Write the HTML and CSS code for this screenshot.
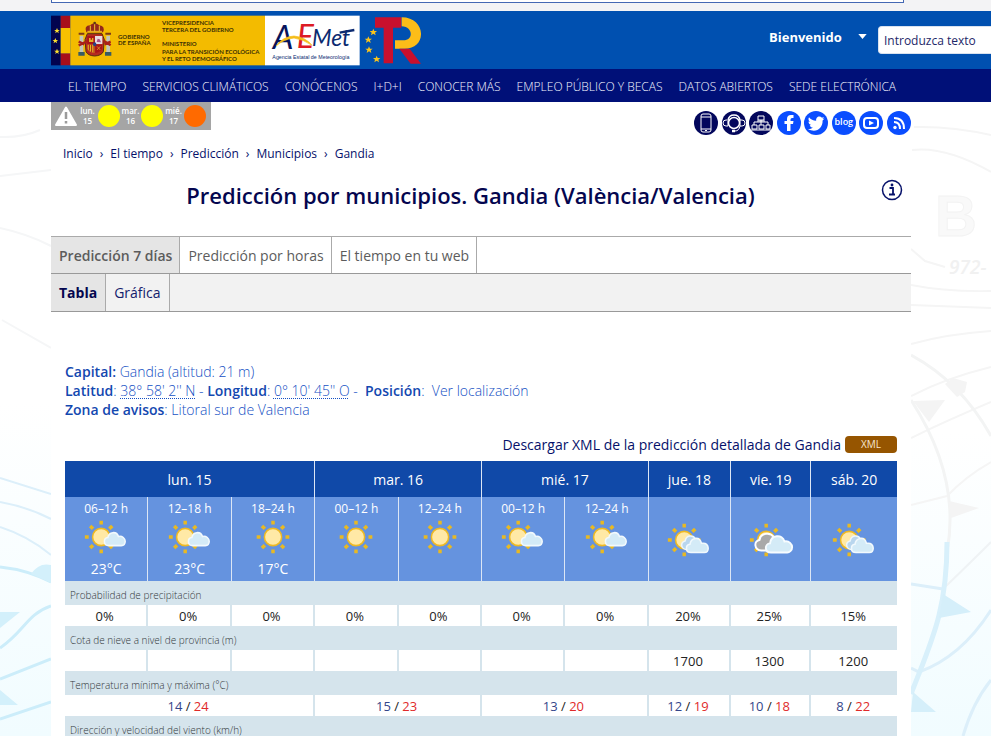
FILE: index.html
```html
<!DOCTYPE html>
<html lang="es">
<head>
<meta charset="utf-8">
<title>El Tiempo: Gandia</title>
<link rel="stylesheet" href="styles.css">
</head>
<body>
<svg class="defs" aria-hidden="true">
  <defs>
    <g id="sun">
      <path d="M20 2v4M20 32v4M3 19h4M33 19h4M8.500 7.500l3 3M31.500 7.500l-3 3M8.500 30.500l3-3M31.500 30.500l-3-3" stroke="#e8b923" stroke-width="3.600"/>
      <circle cx="20" cy="19" r="9" fill="#ffe9a6" stroke="#efb922" stroke-width="1.600"/>
    </g>
    <path id="cloud" d="M28 28c-6 0-6-8-1-8.500c1-6 9-7 11-1c4-1 7 2 7 5c0 3-2 4.500-4 4.500z"/>
    <linearGradient id="wash" x1="0" y1="0" x2="0" y2="1"><stop offset="0" stop-color="#fff"/><stop offset="1" stop-color="#f1fcff"/></linearGradient>
    <symbol id="sunny" viewBox="0 0 50 38"><use href="#sun" x="5"/></symbol>
    <symbol id="few" viewBox="0 0 50 38"><use href="#sun"/><use href="#cloud" fill="#d4ebf7" stroke="#f2f9fd" stroke-width="1.600"/></symbol>
    <symbol id="broken" viewBox="0 0 50 38"><use href="#sun"/><path d="M22 29c-6-1-6-8-1-9c1-6 8-7 11-2l-3 11z" fill="#b9d6ee" stroke="#edf6fb" stroke-width="1.500"/><path d="M27 32c-6 0-6-8-1-8.500c1-7 10-9 12-1c5-1 7 2 7 5c0 3-2 4.500-4 4.500z" fill="#d4ebf7" stroke="#f2f9fd" stroke-width="1.600"/></symbol>
    <symbol id="overcast" viewBox="0 0 50 38"><use href="#sun"/><path d="M15 30c-8-1-8-10-2-11c1-7 11-9 15-3l-4 14z" fill="#a9a9a9" stroke="#fff" stroke-width="2"/><path d="M25 32c-7 0-7-9-1-9.500c1-9 13-10 15-2c5-1 8 3 8 6c0 3.500-3 5.500-5 5.500z" fill="#d4ebf7" stroke="#f7fcff" stroke-width="2"/></symbol>
  </defs>
</svg>

<svg class="chart chart-left" viewBox="0 0 51 634" aria-hidden="true">
  <rect y="300" width="51" height="334" fill="url(#wash)"/>
  <g fill="none" stroke="#f5f6f7" stroke-width="2"><path d="M0 35Q22 36 40 28M0 74L51 68M0 126Q28 132 51 144M2 218L51 246"/></g>
  <g fill="none" stroke="#dceffa" stroke-width="2"><path d="M0 376L51 392M0 400Q28 405 51 417M0 425Q28 434 51 453"/></g>
  <g fill="none" stroke="#ccedfa" stroke-width="3"><path d="M0 465Q28 468 51 480M0 546C24 530 27 512 51 504M0 577L51 557M0 617L51 600"/></g>
  <path d="M31 472Q39 460 51 463V481zM0 510H20L0 526zM0 588L18 603H0z" fill="#d3f0fb"/>
</svg>
<svg class="chart chart-right" viewBox="0 0 80 634" aria-hidden="true">
  <rect y="330" width="80" height="304" fill="url(#wash)"/>
  <g fill="none" stroke="#f5f5f5" stroke-width="2"><path d="M1 48Q35 44 80 70M3 25Q40 24 80 33M0 147L14 159L34 165M0 183Q35 190 80 189M0 203L80 206M0 242Q36 232 80 229M0 294Q35 276 80 265M0 336Q35 319 80 300M0 403L36 394Q55 374 80 360"/></g>
  <path d="M0 253Q50 280 80 334M0 298Q50 375 36 450" fill="none" stroke="#f3f4f4" stroke-width="3"/>
  <path d="M34 282L42 276L56 280L54 290L46 295zM2 299L34 298L18 320zM38 399L68 406L40 416z" fill="#f4f4f4"/>
  <g fill="none" stroke="#dceffa" stroke-width="3"><path d="M0 482L32 487M0 566L8 570Q50 555 80 508M52 634Q62 600 80 578"/></g>
  <path d="M32 487Q60 460 80 440" fill="none" stroke="#eff3f5" stroke-width="2"/>
  <path d="M36 440C36 510 20 540 0 592" fill="none" stroke="#d8f0fb" stroke-width="5"/>
  <path d="M32 492L60 510L28 516zM2 590L25 610H0z" fill="#d5effa"/>
  <text x="24" y="134" class="chart-letter">B</text>
  <text x="38" y="172" class="chart-number">972-</text>
</svg>

<div class="top-strip"><div class="notice"></div></div>

<header class="masthead">
  <a href="#" class="logos" aria-label="Agencia Estatal de Meteorología">
  <svg viewBox="33 45 1110 153" width="370" height="51">
    <rect x="33" y="47" width="29" height="149" fill="#02044f"/>
    <path d="M62 47h29v37H62zM62 160h29v36H62z" fill="#a80f1b"/>
    <path d="M62 84h29v76H62z" fill="#f8c000"/>
    <rect x="91" y="47" width="584" height="149" fill="#f3bb00"/>
    <g fill="#fcdf2e"><path id="st" d="M51 84l2.500 6h6l-5 4l2 6l-5.500-4l-5.500 4l2-6l-5-4h6z"/><use href="#st" x="-5" y="30"/><use href="#st" y="62"/></g>
    <g>
      <path d="M142 101h44l7 18-3 36q-6 12-26 13-20-1-26-13l-3-36z" fill="#b52b20" stroke="#55300f" stroke-width="3"/>
      <path d="M165 108h22v24h-22z" fill="#e7dce2"/><path d="M142 108h22v24h-22z" fill="#a91419"/><path d="M147 126v-12h5v5h4v-5h4v12z" fill="#e2b323"/>
      <path d="M170 126l3-10 6 2 4 9z" fill="#aa508b"/><path d="M143 134h21v24q-20-3-21-12z" fill="#e3b923"/><path d="M148 134v18M155 134v22M162 134v24" stroke="#a91419" stroke-width="3"/><path d="M166 134h20v13q-5 9-20 12z" fill="#a91419"/>
      <path d="M171 139l10 11m0-11l-10 11" stroke="#e2b323" stroke-width="2"/><ellipse cx="164" cy="133" rx="5" ry="6" fill="#294185"/>
      <path d="M139 97q-8-20 11-21 14-12 28 0 19 3 11 21z" fill="#93281b"/><path d="M164 67v28M151 77v16M178 77v16M142 94h44" stroke="#efc32c" stroke-width="3"/><circle cx="164" cy="69" r="4" fill="#5c3a16"/>
      <path d="M119 107h11v49h-11zM199 107h11v49h-11z" fill="#c1c6bb"/><path d="M116 104h17v-6h-17zM196 104h17v-6h-17z" fill="#7c3a19"/>
      <path d="M115 156h19v11h-19zM195 156h19v11h-19z" fill="#375b64"/><path d="M116 136l27-13M212 136l-20-13M116 125l17 8M212 125l-18 8" stroke="#aa2018" stroke-width="7"/>
    </g>
    <g class="gov-text"><text x="234" y="117">GOBIERNO</text><text x="234" y="136">DE ESPAÑA</text>
    <text x="366" y="75">VICEPRESIDENCIA</text><text x="366" y="96">TERCERA DEL GOBIERNO</text><text x="366" y="139">MINISTERIO</text><text x="366" y="162">PARA LA TRANSICIÓN ECOLÓGICA</text><text x="366" y="183">Y EL RETO DEMOGRÁFICO</text></g>
    <rect x="675" y="47" width="284" height="149" fill="#fff"/>
    <g class="aemet"><text x="698" y="148" fill="#07145c" font-size="98">A</text><text x="770" y="145" fill="#dd1b24" font-size="96">E</text><text x="816" y="139" fill="#0b2a70" font-size="68">Met</text></g>
    <path d="M708 138Q728 110 762 108Q798 112 816 136Q790 118 762 114Q730 118 708 138" fill="#f5bd19" stroke="#f5bd19" stroke-width="2"/>
    <path d="M899 98L943 90" stroke="#0b2a70" stroke-width="7"/>
    <text x="697" y="177" class="agency">Agencia Estatal de Meteorología</text>
    <path d="M1005 52h79v31h-25v107h-28V83h-26z" fill="#c8102e"/>
    <path d="M1085 52c75 0 78 97 5 94h-25v-25h25c31 0 30-41-5-42z" fill="#fcbd18"/>
    <path d="M1078 146h31l34 45h-31z" fill="#c8102e"/>
    <g fill="#fbc51b"><path id="st2" d="M985 109l3 7h8l-6 5 2 8-7-5-7 5 2-8-6-5h8z"/><use href="#st2" x="15" y="-23"/><use href="#st2" x="2" y="30"/><use href="#st2" x="25" y="58"/></g>
  </svg></a>
  <label class="account"><span class="hidden">Cuenta</span>
    <select><option>Bienvenido</option></select>
    <svg viewBox="0 0 10 6" width="9" height="5"><path d="M0 0h10L5 6z" fill="#fff"/></svg>
  </label>
  <input class="search" type="text" aria-label="Buscar" placeholder="Introduzca texto">
</header>

<nav class="main-nav" aria-label="Principal">
  <a href="#">EL TIEMPO</a><a href="#">SERVICIOS CLIMÁTICOS</a><a href="#">CONÓCENOS</a><a href="#">I+D+I</a><a href="#">CONOCER MÁS</a><a href="#">EMPLEO PÚBLICO Y BECAS</a><a href="#">DATOS ABIERTOS</a><a href="#">SEDE ELECTRÓNICA</a>
</nav>

<main class="page">
  <div class="tools">
    <a href="#" class="warnings">
      <svg viewBox="0 0 22 20" width="22" height="20"><path d="M11 1.500L21 19H1z" fill="#fff" stroke="#fff" stroke-width="2" stroke-linejoin="round"/><path d="M11 6v7M11 15v2.500" stroke="#9b9b9b" stroke-width="2.500"/></svg>
      <span class="day">lun.<br>15</span><i class="dot"></i>
      <span class="day">mar.<br>16</span><i class="dot"></i>
      <span class="day">mié.<br>17</span><i class="dot orange"></i>
    </a>
    <div class="social">
      <a href="#" aria-label="Móvil" class="navy"><svg viewBox="0 0 24 24"><rect x="7" y="3" width="10" height="18" rx="2"/><path d="M7 6h10M7 18h10M11 19.500h2"/></svg></a>
      <a href="#" aria-label="Atención" class="navy"><svg viewBox="0 0 24 24"><circle cx="12" cy="12" r="5.500" stroke-width="1.500"/><path d="M5 9H4a2 2 0 0 0 0 6h2V9M18 9h2a2 2 0 0 1 0 6h-2zM18 15q-1 5-5 5"/><path d="M10 20h3" stroke-width="2.500"/><path d="M6 9q1-5 6-5t6 5" stroke-width="1.500"/></svg></a>
      <a href="#" aria-label="Mapa web" class="navy"><svg viewBox="0 0 24 24"><path d="M9 5h6v4H9zM3 14h5v4H3zM10 14h5v4h-5zM17 14h4v4h-4zM12 9v5M5 14v-3h14v3M2 19h20M8 10h8"/></svg></a>
      <a href="#" aria-label="Facebook"><svg viewBox="0 0 24 24"><path class="solid" d="M10 20v-7H7.500v-3H10V8q0-4 4-4h2.500v3H15q-1.500 0-1.500 1.500V10h3l-.5 3h-2.500v7z"/></svg></a>
      <a href="#" aria-label="Twitter"><svg viewBox="0 0 24 24"><path class="solid" d="M20.500 7.500l-2 .5 1.500-2-2 .8c-3-3-6.500 0-5.800 3-3 0-5.500-1.500-7.200-3.600-1 1.700-.5 3.700 1 4.800l-1.500-.4c0 1.700 1 3 2.700 3.500l-1.500.1c.5 1.400 1.700 2.300 3.200 2.300-1.600 1.200-3.200 1.600-5 1.500 8 4.500 15-.5 14.700-8.500z"/></svg></a>
      <a href="#" class="blog">blog</a>
      <a href="#" aria-label="YouTube"><svg viewBox="0 0 24 24"><rect x="5" y="7" width="14" height="10" rx="3" stroke-width="2"/><path class="solid" d="M10 9.500l5 2.500-5 2.500z"/></svg></a>
      <a href="#" aria-label="RSS"><svg viewBox="0 0 24 24"><circle class="solid" cx="8" cy="16.500" r="1.700"/><path d="M7 11q6 0 6 7M7 7q10 0 10 11" stroke-width="2"/></svg></a>
    </div>
  </div>

  <nav class="crumbs" aria-label="Ruta"><a href="#">Inicio</a><span>›</span><a href="#">El tiempo</a><span>›</span><a href="#">Predicción</a><span>›</span><a href="#">Municipios</a><span>›</span><a href="#">Gandia</a></nav>

  <div class="title-row">
    <h1>Predicción por municipios. Gandia (València/Valencia)</h1>
    <a href="#" aria-label="Información"><svg viewBox="0 0 22 22" width="22" height="22"><circle cx="11" cy="11" r="9.500" fill="#fff" stroke="#06116a" stroke-width="1.500"/><path d="M8.500 9H12v6M8 15.500h6" fill="none" stroke="#06116a" stroke-width="1.800"/><circle cx="11" cy="6" r="1.400" fill="#06116a"/></svg></a>
  </div>

  <nav class="tabs" aria-label="Vistas"><a href="#" class="active">Predicción 7 días</a><a href="#">Predicción por horas</a><a href="#">El tiempo en tu web</a></nav>
  <nav class="tabs sub" aria-label="Formato"><a href="#" class="active">Tabla</a><a href="#">Gráfica</a></nav>

  <section class="forecast">
    <div class="place">
      <p><b>Capital:</b> Gandia (altitud: 21 m)</p>
      <p><b>Latitud</b>: <abbr>38° 58' 2'' N</abbr> - <b>Longitud</b>: <abbr>0° 10' 45'' O</abbr> - &nbsp;<b>Posición</b>: &nbsp;<a href="#">Ver localización</a></p>
      <p><b>Zona de avisos</b>: Litoral sur de Valencia</p>
    </div>
    <div class="download"><span>Descargar XML de la predicción detallada de Gandia</span><a href="#">XML</a></div>

    <table>
      <colgroup><col class="period" span="7"><col class="thu"><col class="fri"><col class="sat"></colgroup>
      <thead>
        <tr class="days"><th colspan="3">lun. 15</th><th colspan="2">mar. 16</th><th colspan="2">mié. 17</th><th>jue. 18</th><th>vie. 19</th><th>sáb. 20</th></tr>
        <tr class="sky">
          <th>06–12 h<svg><use href="#few"/></svg><span>23°C</span></th>
          <th>12–18 h<svg><use href="#few"/></svg><span>23°C</span></th>
          <th>18–24 h<svg><use href="#sunny"/></svg><span>17°C</span></th>
          <th>00–12 h<svg><use href="#sunny"/></svg></th>
          <th>12–24 h<svg><use href="#sunny"/></svg></th>
          <th>00–12 h<svg><use href="#few"/></svg></th>
          <th>12–24 h<svg><use href="#few"/></svg></th>
          <th class="whole"><svg><use href="#broken"/></svg></th>
          <th class="whole"><svg><use href="#overcast"/></svg></th>
          <th class="whole"><svg><use href="#broken"/></svg></th>
        </tr>
      </thead>
      <tbody>
        <tr class="label"><th colspan="10">Probabilidad de precipitación</th></tr>
        <tr><td>0%</td><td>0%</td><td>0%</td><td>0%</td><td>0%</td><td>0%</td><td>0%</td><td>20%</td><td>25%</td><td>15%</td></tr>
        <tr class="label"><th colspan="10">Cota de nieve a nivel de provincia (m)</th></tr>
        <tr><td></td><td></td><td></td><td></td><td></td><td></td><td></td><td>1700</td><td>1300</td><td>1200</td></tr>
        <tr class="label"><th colspan="10">Temperatura mínima y máxima (°C)</th></tr>
        <tr><td colspan="3"><span class="min">14</span> / <span class="max">24</span></td><td colspan="2"><span class="min">15</span> / <span class="max">23</span></td><td colspan="2"><span class="min">13</span> / <span class="max">20</span></td><td><span class="min">12</span> / <span class="max">19</span></td><td><span class="min">10</span> / <span class="max">18</span></td><td><span class="min">8</span> / <span class="max">22</span></td></tr>
        <tr class="label"><th colspan="10">Dirección y velocidad del viento (km/h)</th></tr>
      </tbody>
    </table>
  </section>
</main>
</body>
</html>
```
FILE: styles.css
```css
* { box-sizing: border-box; }
html, body { height: 100%; }
body {
  margin: 0;
  position: relative;
  overflow: hidden;
  background: #fff;
  color: #06116a;
  font-family: "Open Sans", "Noto Sans", sans-serif;
  font-size: 14px;
}
a { color: inherit; text-decoration: none; }
.defs { position: absolute; width: 0; height: 0; }
.hidden { position: absolute; width: 1px; height: 1px; overflow: hidden; clip-path: inset(50%); }

/* Weather chart behind both margins */
.chart { position: absolute; top: 102px; height: 634px; z-index: -1; }
.chart-left { left: 0; width: 51px; }
.chart-right { right: 0; width: 80px; }
.chart-letter { font: bold 58px "Liberation Sans", sans-serif; fill: #f9f9f9; stroke: #f3f3f3; }
.chart-number { font: italic 600 19px "Open Sans", sans-serif; fill: #f1f1f1; }

.top-strip { height: 11px; padding: 0 87px 0 51px; background: #f3f3f5; }
.notice { height: 3px; background: #fff; border: 1px solid #4468b4; border-top: 0; }

.masthead { display: flex; align-items: flex-start; height: 58px; padding: 4px 0 0 51px; background: #0050b0; }
.logos svg { display: block; }
.gov-text { font: bold 18px Lato, sans-serif; fill: #3c3005; }
.aemet { font-family: Lato, sans-serif; font-style: italic; }
.agency { font: 16px "Liberation Sans", sans-serif; fill: #0b2a70; }
.account { position: relative; margin: 11px 11px 0 auto; }
.account select { appearance: none; width: 98px; padding: 0; border: 0; background: none; color: #fff; font: bold 13px/22px "Open Sans", sans-serif; }
.account svg { position: absolute; right: 0; top: 8px; }
.search { width: 113px; height: 28px; margin-top: 11px; padding: 0 5px; border: 1px solid #d8e2ef; border-right: 0; border-radius: 4px 0 0 4px; background: #fff; font: 12px "Open Sans", sans-serif; }
.search::placeholder { color: #1d2768; opacity: 1; }

.main-nav { display: flex; align-items: center; gap: 16px; height: 33px; padding: 2px 68px 0; background: #001078; color: #f4f6ff; font-size: 12px; font-weight: 300; white-space: nowrap; }

.page { margin: 0 80px 0 51px; background: #fff; }
.tools { display: flex; justify-content: space-between; height: 36px; }
.warnings { display: flex; align-items: center; width: 160px; height: 28px; padding-left: 4px; background: #a5a5a5; color: #fff; font-size: 8px; font-weight: 600; line-height: 10px; text-align: center; }
.day { width: 21px; }
.dot { width: 22px; height: 22px; border-radius: 50%; background: #ff0; }
.dot.orange { background: #ff6a00; }
.social { display: flex; justify-content: space-between; width: 217px; padding-top: 9px; }
.social a { width: 24px; height: 24px; border-radius: 50%; background: #0a4dff; color: #fff; }
.social .navy { background: #03075c; }
.social svg { display: block; fill: none; stroke: #fff; stroke-width: 1; }
.social .solid { fill: #fff; stroke: none; }
.social .blog { font-size: 9px; font-weight: 600; line-height: 22px; text-align: center; }

.crumbs { display: flex; gap: 7px; padding: 7px 12px 0; font-size: 12px; line-height: 18px; }

.title-row { display: flex; align-items: flex-start; padding: 16px 8px 0 9px; }
h1 { flex: 1; margin: 0; font-size: 22px; font-weight: 600; line-height: 32px; text-align: center; color: #04064f; }

.tabs { display: flex; height: 38px; border-top: 1px solid #aaa; border-bottom: 1px solid #999; color: #5c5c5c; line-height: 37px; white-space: nowrap; }
.title-row + .tabs { margin-top: 25px; }
.tabs a { padding: 0 7px 0 8px; border-right: 1px solid #aaa; }
.tabs .active { background: #e5e5e5; font-weight: 600; }
.tabs.sub { border-top: 0; background: #f2f2f2; color: #12206c; }
.tabs.sub a { padding: 0 8px; }
.tabs.sub .active { font-weight: 700; color: #04064f; }

.forecast { padding: 50px 14px 0; }
.place { color: #1450c4; font-weight: 300; line-height: 19px; }
.place p { margin: 0; }
.place b { color: #1348b0; font-weight: 600; }
.place abbr { text-decoration: underline dotted 1px; text-underline-offset: 2px; }
.download { display: flex; justify-content: flex-end; align-items: center; gap: 4px; height: 20px; margin: 15px 0 7px; }
.download a { width: 52px; border-radius: 4px; background: #965500; color: #f6e6d0; font-size: 10px; line-height: 17px; text-align: center; }

table { width: 100%; table-layout: fixed; border-collapse: separate; border-spacing: 0; color: #222; text-align: center; }
.period { width: 80px; }
.thu { width: 79px; }
.fri { width: 77px; }
.sat { width: 82px; }
th, td { padding: 0; font-weight: 400; }
.days th, .sky th { border-right: 1px solid #dce6f5; color: #fff; }
.days th { height: 36px; background: #1049a8; }
.sky th { height: 84px; padding-top: 3px; background: #6593df; vertical-align: top; line-height: 18px; font-size: 12px; }
.sky span { display: block; font-size: 14px; }
.sky svg { display: block; width: 48px; height: 38px; margin: 0 auto 4px; }
.sky .whole { padding-top: 24px; }
td { height: 21px; padding-right: 2px; border-right: 2px solid #d5e4ec; background: #fff; font-size: 13px; line-height: 20px; }
tr > :last-child { border-right: 0; }
.label th { height: 24px; padding: 3px 5px 0; background: #d5e4ec; color: #33383b; font-size: 10px; font-weight: 300; line-height: 20px; text-align: left; }
.min { color: #34468a; }
.max { color: #e02a2a; }
```
